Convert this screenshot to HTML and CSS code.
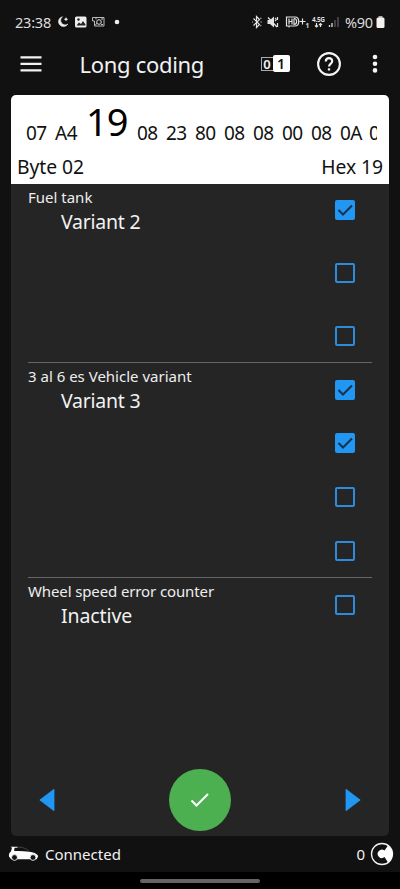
FILE: index.html
```
<!DOCTYPE html>
<html lang="en">
<head>
<meta charset="utf-8">
<title>Long coding</title>
<link rel="stylesheet" href="styles.css">
</head>
<body>
<header class="status">
  <span class="clock">23:38</span>
  <svg class="s-left" width="66" height="14" viewBox="0 0 66 14">
    <path d="M5.500 1.700A5 5 0 1 0 10.900 9A4.200 4.200 0 0 1 5.500 1.700Z" fill="#eee" stroke="#eee" stroke-width=".6"/><path d="M9 2l.7 1.500 1.500.7-1.500.7L9 6.400l-.7-1.500-1.500-.7 1.500-.7z" fill="#eee"/>
    <rect x="18" y="1.500" width="11.500" height="11" rx="1.500" fill="#eee"/><path d="M19.500 10.500l2.500-3 2 1.500 2-3 2.500 3.500v1h-9z" fill="#222"/><circle cx="21.500" cy="4.500" r="1.200" fill="#222"/>
    <path d="M35.500 2.500h11.500v8.500H37.500v-5H35.500zM39 2.500v2M45 2.500v1.500" fill="none" stroke="#bbb"/><circle cx="42" cy="7" r="2.300" fill="none" stroke="#ddd"/><path d="M38.500 10l1.500-2M44.500 4.500l1.500-.5M44 9.500h2" stroke="#bbb"/>
    <circle cx="60" cy="7" r="2.300" fill="#eee"/>
  </svg>
  <svg class="s-right" width="91" height="16" viewBox="0 0 91 16">
    <g fill="none" stroke="#e4e4e4" stroke-width="1.200">
      <path d="M2.500 4.500l6 6-3 3V2.500l3 3-6 6M1 8h.8M9.500 8h1.200M9.500 4.500l.8-.6M9.500 11.500l.8.6"/>
      <path d="M17 3.500l9 9.500M24 4c1.500 1 1.500 2 0 3M26.500 3v3M26.500 9v4"/>
      <path d="M35.500 3H44c5 0 5 9 0 9H35.500zM38 4.500v6M38 7.500h3M41 4.500v6M43 4.500v6c3.500 0 3.500-6 0-6M38 12v1.500M48.500 7.500h6M51.500 4.500v6"/>
      <path d="M65.500 9v4M64 11.500l1.500 1.500 1.500-1.500M69.500 13V9.500M68 11l1.500-1.500L71 11"/>
    </g>
    <path d="M16.500 6H19l4-3.500v11L19 10h-2.500z" fill="#e4e4e4"/>
    <text x="54.500" y="13.500" class="tiny">1</text><text x="61" y="7.500" class="tiny" textLength="13">4.5G</text>
    <path d="M78.500 11v2M81 9v4" stroke="#ddd" stroke-width="1.300"/><path d="M84 6v7M87 3v10" stroke="#555" stroke-width="1.400"/>
  </svg>
  <span class="percent">%90</span>
  <svg class="battery" width="9" height="14" viewBox="0 0 9 14"><rect x="2.500" y="1" width="4" height="2" fill="#aaa"/><rect x=".5" y="2.500" width="8" height="10.500" rx="1.500" fill="#f2f2f2"/></svg>
</header>

<nav class="appbar">
  <svg class="menu" width="22" height="18" viewBox="0 0 22 18"><path d="M.5 2.400h21M.5 8.900h21M.5 15.400h21" stroke="#f2f2f2" stroke-width="2.200"/></svg>
  <h1 class="title">Long coding</h1>
  <div class="bits"><span class="zero">0</span><span class="one">1</span></div>
  <svg class="help" width="26" height="26" viewBox="0 0 26 26" fill="none" stroke="#f5f5f5" stroke-width="2.100"><circle cx="13" cy="13" r="10.900"/><path d="M9.800 10.500C9.800 6.100 16.200 6.100 16.200 10.200C16.200 12.500 13 12.700 13 15.600" stroke-width="2.200"/><path d="M13 17.300v2.200" stroke-width="2.300"/></svg>
  <svg class="more" width="6" height="20" viewBox="0 0 6 20" fill="#f5f5f5"><circle cx="3" cy="3" r="2.300"/><circle cx="3" cy="9.700" r="2.300"/><circle cx="3" cy="16.400" r="2.300"/></svg>
</nav>

<main class="card">
  <section class="coding">
    <div class="bytes"><span>07</span><span>A4</span><span class="current">19</span><span>08</span><span>23</span><span>80</span><span>08</span><span>08</span><span>00</span><span>08</span><span>0A</span><span class="cut">0</span></div>
    <div class="info"><span class="byte">Byte 02</span><span class="hex">Hex 19</span></div>
  </section>

  <section class="group tank">
    <div class="labels"><p class="name n1">Fuel tank</p><p class="value">Variant 2</p></div>
    <div class="checks">
      <div><i class="box on"><svg viewBox="0 0 20 20"><path d="M3.500 10l4.500 4.500L17 5.500"/></svg></i></div>
      <div><i class="box"></i></div>
      <div><i class="box"></i></div>
    </div>
  </section>
  <section class="group vehicle">
    <div class="labels"><p class="name n2">3 al 6 es Vehicle variant</p><p class="value">Variant 3</p></div>
    <div class="checks">
      <div><i class="box on"><svg viewBox="0 0 20 20"><path d="M3.500 10l4.500 4.500L17 5.500"/></svg></i></div>
      <div><i class="box on"><svg viewBox="0 0 20 20"><path d="M3.500 10l4.500 4.500L17 5.500"/></svg></i></div>
      <div><i class="box"></i></div>
      <div><i class="box"></i></div>
    </div>
  </section>
  <section class="group wheel">
    <div class="labels"><p class="name n3">Wheel speed error counter</p><p class="value inactive">Inactive</p></div>
    <div class="checks"><div><i class="box"></i></div></div>
  </section>

  <div class="actions">
    <svg width="16" height="24" viewBox="0 0 16 24"><path d="M15 1.200v21.600L.8 12z" fill="#2196f3" stroke="#2196f3" stroke-width=".8" stroke-linejoin="round"/></svg>
    <div class="confirm"><svg width="22" height="18" viewBox="0 0 22 18"><path d="M2.500 9.500l5 5L19 3" fill="none" stroke="#fff" stroke-width="2.100"/></svg></div>
    <svg width="16" height="24" viewBox="0 0 16 24"><path d="M1 1.200v21.600L15.200 12z" fill="#2196f3" stroke="#2196f3" stroke-width=".8" stroke-linejoin="round"/></svg>
  </div>
</main>

<footer class="footer">
  <svg class="car" width="31" height="18" viewBox="0 0 31 18"><path d="M2.500 2.700h7v1H6.500L6.200 7c5-.2 10-.2 15 .8 4 .5 7.500 1.500 9 4.200l-1.500 3.200H3L1 12.500C.7 9 2 8.500 3 7.200l1-3.500z" fill="#fff"/><path d="M9 3.200c6-.5 9 1.500 13 4.600" fill="none" stroke="#555" stroke-width=".7"/><g fill="#161616" stroke="#fff" stroke-width=".8"><circle cx="6.500" cy="13.500" r="2.900"/><circle cx="25" cy="13.500" r="2.900"/></g></svg>
  <span class="connected">Connected</span>
  <span class="count">0</span>
  <svg class="logo" width="24" height="24" viewBox="0 0 24 24"><circle cx="12" cy="12" r="10.500" fill="#111" stroke="#f2f2f2" stroke-width="1.300"/><path d="M18 3.400A10.500 10.500 0 0 1 18 20.600L14.500 15.100A4.200 4.200 0 1 1 14.500 8.500z" fill="#fff"/></svg>
</footer>
<div class="gesture"><span></span></div>
</body>
</html>
```
FILE: styles.css
```
* { box-sizing: border-box; }
body {
  margin: 0;
  width: 400px;
  height: 889px;
  overflow: hidden;
  display: flex;
  flex-direction: column;
  background: #111;
  color: #f2f2f2;
  font-family: "Noto Sans", sans-serif;
  white-space: nowrap;
}
svg { display: block; flex: none; }
p, h1 { margin: 0; font-weight: 400; }

.status { height: 42px; padding: 2px 14px 0 15px; display: flex; align-items: center; }
.clock { width: 42px; font-size: 14.500px; letter-spacing: -.2px; color: #ddd; }
.s-right { margin-left: 128px; }
.tiny { font-size: 6.5px; font-weight: 700; fill: #ddd; }
.percent { width: 31px; margin-left: 3px; font-size: 14.500px; letter-spacing: -.3px; color: #ddd; }

.appbar { height: 53px; padding: 0 20px 9px; display: flex; align-items: center; }
.title { width: 181px; margin-left: 37.500px; font-size: 22px; line-height: 30px; letter-spacing: -.3px; }
.bits { display: flex; width: 29px; height: 17px; margin-top: -1px; text-align: center; }
.zero { width: 12px; height: 14px; line-height: 12px; margin-top: 1.500px; border: 1px solid #aaa; border-right: 0; font-size: 13px; font-weight: 600; }
.one { width: 17px; border-radius: 2px; background: #fff; color: #111; font-size: 14px; line-height: 17px; font-weight: 600; }
.help { margin-left: 26px; }
.more { margin-left: 30.500px; }

.card { height: 741px; margin: 0 11px; border-radius: 5px; overflow: hidden; background: #252525; display: flex; flex-direction: column; }
.coding { flex: none; height: 89px; background: #fff; color: #111; }
.bytes { height: 60px; margin: 0 11px 0 15px; display: flex; align-items: baseline; gap: 9px; overflow: hidden; font-size: 19px; line-height: 60px; letter-spacing: -.5px; }
.bytes span { flex: none; width: 20px; }
.bytes .current { width: 42px; margin: 0 0 0 2px; font-size: 38px; line-height: 60px; letter-spacing: -1px; position: relative; top: -4px; color: #000; }
.bytes .cut { width: 8px; overflow-x: clip; }
.info { display: flex; justify-content: space-between; padding: 0 6px; font-size: 19.300px; line-height: 23px; letter-spacing: -.05px; }

.group { flex: none; display: flex; justify-content: space-between; margin: 0 17px; }
.tank { height: 179px; border-bottom: 1px solid #666; }
.vehicle { height: 215px; border-bottom: 1px solid #666; }
.wheel { height: 54px; }
.labels { padding-top: 4px; }
.name { font-size: 15px; line-height: 19px; color: #eee; }
.n3 { letter-spacing: -.12px; }
.value { padding-left: 33px; font-size: 19.500px; line-height: 29px; letter-spacing: -.25px; }
.inactive { letter-spacing: -.1px; }
.checks { width: 20px; margin-right: 17px; }
.checks div { height: 53.600px; display: flex; align-items: center; }
.tank .checks { margin-top: -5px; }
.tank .checks div { height: 62.800px; }
.box { width: 20px; height: 20px; border: 2px solid #2d8bdc; border-radius: 2px; }
.box.on { border: 0; background: #2196f3; }
.box svg { width: 20px; height: 20px; }
.box path { fill: none; stroke: #15334d; stroke-width: 2.100; }

.actions { margin-top: auto; height: 72px; display: flex; align-items: center; justify-content: space-between; padding: 0 28px; }
.confirm { width: 62px; height: 62px; border-radius: 50%; background: #4caf50; display: flex; align-items: center; justify-content: center; }

.footer { height: 36px; padding: 0 6px 0 8px; display: flex; align-items: center; }
.car { margin-top: -3px; }
.connected { margin-left: 6px; font-size: 15px; }
.count { margin-left: auto; font-size: 15px; }
.logo { margin-left: 5px; }
.gesture { height: 17px; background: #000; display: flex; justify-content: center; padding-top: 6.500px; }
.gesture span { width: 120px; height: 4.500px; border-radius: 2px; background: #656565; }
```
